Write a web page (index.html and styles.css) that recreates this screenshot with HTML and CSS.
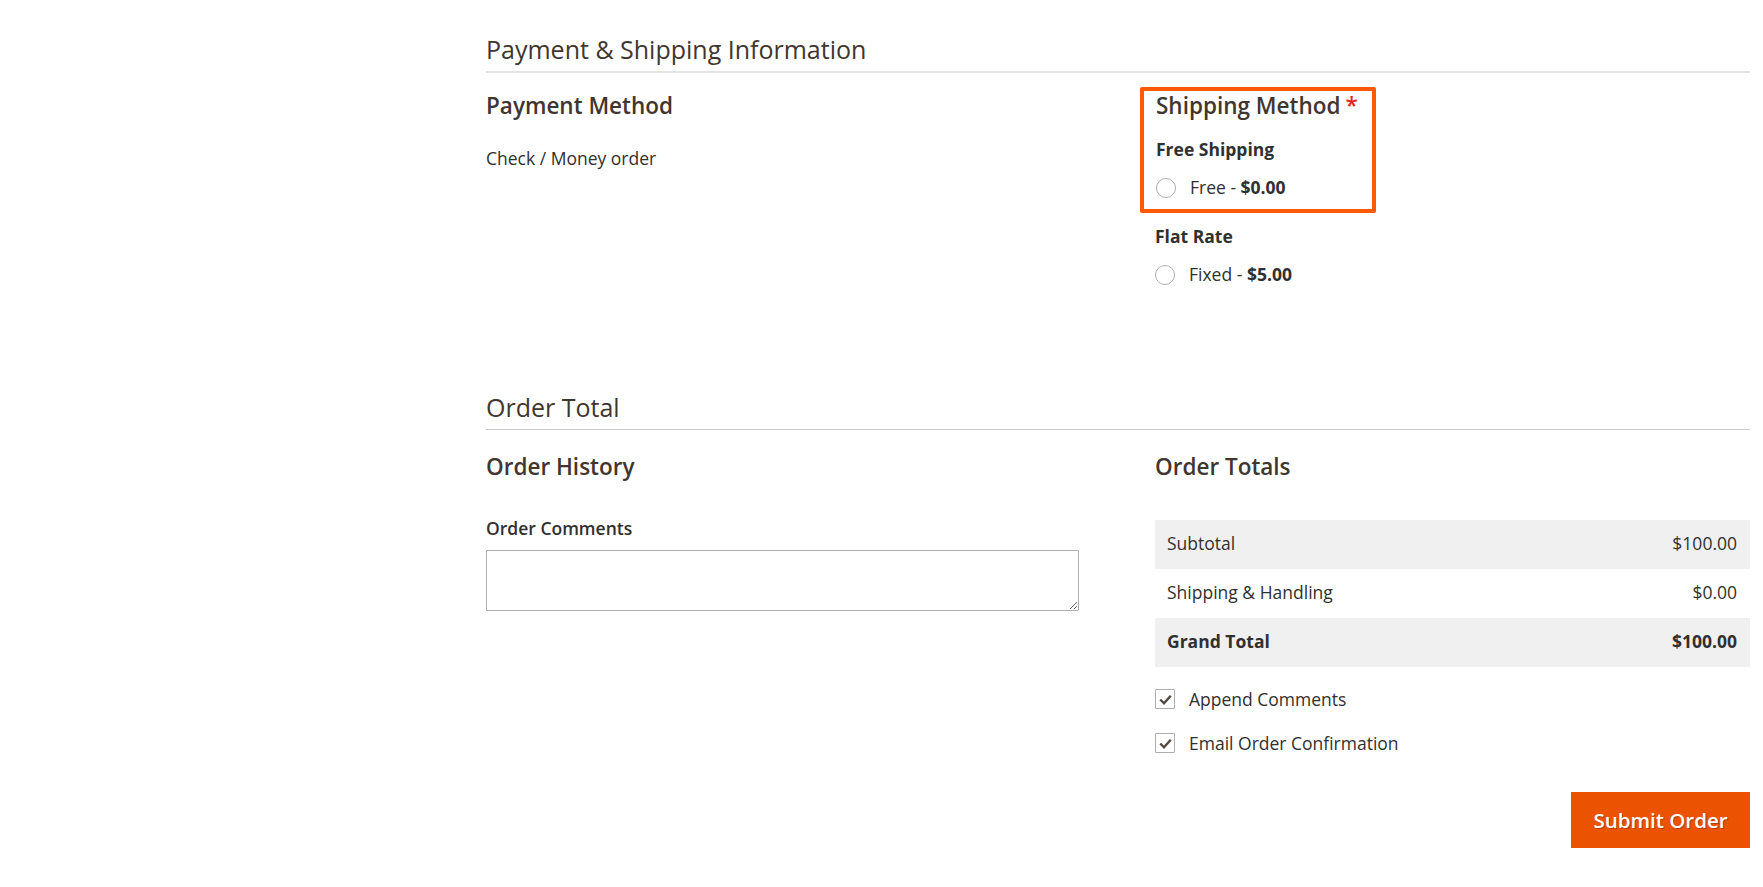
FILE: index.html
```html
<!DOCTYPE html>
<html lang="en">
<head>
  <meta charset="UTF-8">
  <title>Create New Order</title>
  <link rel="stylesheet" href="styles.css">
</head>
<body>
  <div class="page">
    <section class="section section-methods">
      <h2 class="section-title">Payment &amp; Shipping Information</h2>
      <div class="section-content">
        <div class="section-item">
          <h3 class="item-title">Payment Method</h3>
          <p class="payment-name">Check / Money order</p>
        </div>
        <div class="section-item">
          <div class="shipping-box">
            <h3 class="item-title required">Shipping Method</h3>
            <div class="carrier">Free Shipping</div>
            <label class="choice">
              <span class="radio"></span>
              <span>Free - <strong>$0.00</strong></span>
            </label>
          </div>
          <div class="carrier carrier-flat">Flat Rate</div>
          <label class="choice">
            <span class="radio"></span>
            <span>Fixed - <strong>$5.00</strong></span>
          </label>
        </div>
      </div>
    </section>

    <section class="section section-totals">
      <h2 class="section-title thin">Order Total</h2>
      <div class="section-content">
        <div class="section-item">
          <h3 class="item-title">Order History</h3>
          <label class="field-label" for="comments">Order Comments</label>
          <textarea id="comments" class="comments"></textarea>
        </div>
        <div class="section-item">
          <h3 class="item-title">Order Totals</h3>
          <table class="totals">
            <tr class="odd">
              <td>Subtotal</td>
              <td class="price">$100.00</td>
            </tr>
            <tr>
              <td>Shipping &amp; Handling</td>
              <td class="price">$0.00</td>
            </tr>
            <tr class="odd grand">
              <td>Grand Total</td>
              <td class="price">$100.00</td>
            </tr>
          </table>
          <label class="choice check-row">
            <span class="checkbox">
              <svg viewBox="0 0 20 20" width="15" height="15"><polyline points="3,10 8,15 17,5" fill="none" stroke="#514943" stroke-width="3.2"/></svg>
            </span>
            <span>Append Comments</span>
          </label>
          <label class="choice check-row second">
            <span class="checkbox">
              <svg viewBox="0 0 20 20" width="15" height="15"><polyline points="3,10 8,15 17,5" fill="none" stroke="#514943" stroke-width="3.2"/></svg>
            </span>
            <span>Email Order Confirmation</span>
          </label>
          <div class="actions">
            <button class="submit-order">Submit Order</button>
          </div>
        </div>
      </div>
    </section>
  </div>
</body>
</html>
```

FILE: styles.css
```css
body {
  margin: 0;
  font-family: 'Open Sans', 'Liberation Sans', sans-serif;
  font-size: 17.5px;
  line-height: 24px;
  color: #303030;
  background: #fff;
}
.page {
  padding: 34px 13px 0 486px;
}
.section-title {
  margin: 0;
  font-size: 25px;
  line-height: 31px;
  font-weight: 400;
  color: #41362f;
  padding-bottom: 6px;
  border-bottom: 2px solid #e3e3e3;
}
.section-title.thin {
  padding-bottom: 6px;
  border-bottom: 1px solid #cccccc;
}
.section-content {
  display: grid;
  grid-template-columns: 593px 1fr;
  column-gap: 76px;
}
.item-title {
  margin: 19px 0 0;
  font-size: 22.5px;
  line-height: 27px;
  font-weight: 600;
  color: #41362f;
}
.payment-name {
  margin: 27px 0 0;
}
.shipping-box {
  width: fit-content;
  margin: 14px 0 0 -15px;
  padding: 1px 14px 10px 12px;
  border: 4px solid #ff5a00;
  border-radius: 2px;
}
.shipping-box .item-title {
  margin-top: 0;
}
.required::after {
  content: '*';
  color: #e22626;
  margin-left: 5px;
}
.carrier {
  margin-top: 18px;
  font-weight: 700;
  color: #303030;
}
.carrier-flat {
  margin-top: 11px;
}
.choice {
  display: flex;
  align-items: center;
  gap: 14px;
  margin-top: 14px;
}
.choice strong {
  font-weight: 700;
}
.radio {
  width: 18px;
  height: 18px;
  border: 1px solid #adadad;
  border-radius: 50%;
  background: #fff;
  flex: none;
  margin-top: 2px;
}
.section-totals {
  margin-top: 105.5px;
}
.section-totals .item-title {
  margin-top: 23px;
}
.field-label {
  display: block;
  margin-top: 37px;
  line-height: 23px;
  font-weight: 600;
  color: #303030;
}
.comments {
  display: block;
  box-sizing: border-box;
  width: 100%;
  height: 61px;
  margin-top: 10.5px;
  border: 1px solid #adadad;
  border-radius: 1px;
  font-family: inherit;
}
.totals {
  width: 100%;
  margin-top: 40px;
  border-collapse: collapse;
}
.totals td {
  padding: 11px 12px 14px;
}
.totals .price {
  text-align: right;
  padding-right: 13px;
}
.totals .odd td {
  background: #f0f0f0;
}
.totals .grand td {
  font-weight: 700;
}
.check-row {
  margin-top: 20px;
}
.check-row.second {
  margin-top: 20px;
}
.checkbox {
  display: flex;
  align-items: center;
  justify-content: center;
  width: 18px;
  height: 18px;
  border: 1px solid #adadad;
  border-radius: 1px;
  flex: none;
  margin-top: 1px;
}
.actions {
  display: flex;
  justify-content: flex-end;
  margin-top: 37.5px;
}
.submit-order {
  box-sizing: border-box;
  width: 179px;
  font-family: inherit;
  font-size: 20.5px;
  line-height: 24px;
  font-weight: 600;
  color: #fff;
  background: #eb5202;
  border: 1px solid #eb5202;
  padding: 15px 0;
  text-align: center;
  text-shadow: 1px 1px 0 rgba(0, 0, 0, 0.25);
  cursor: pointer;
}
```
